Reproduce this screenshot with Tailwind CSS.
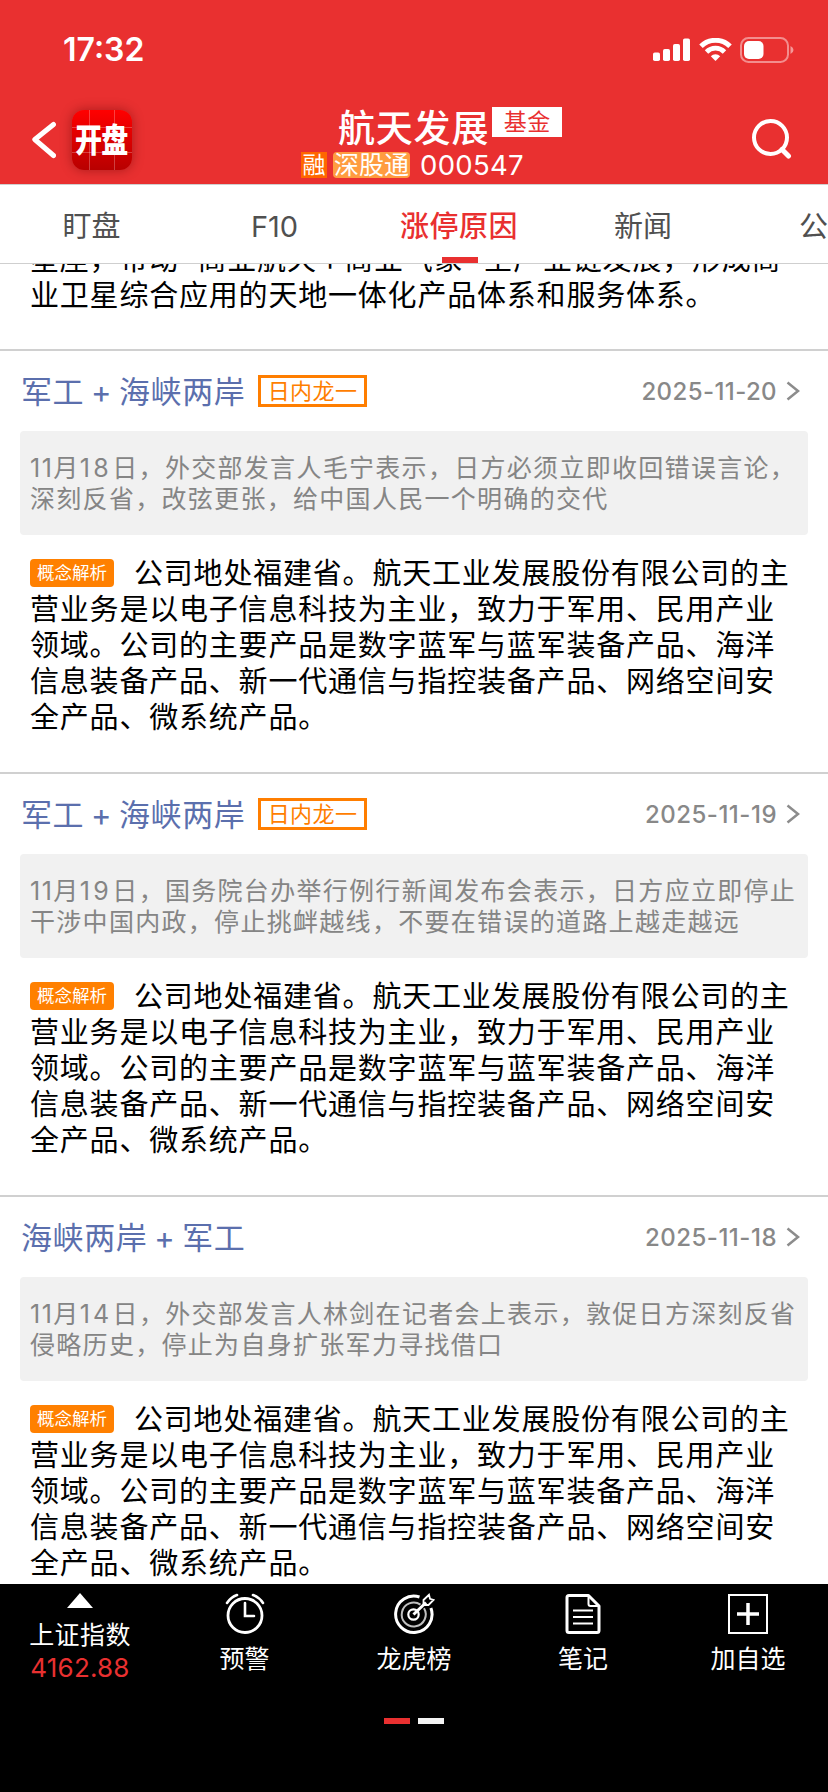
<!DOCTYPE html>
<html lang="zh-CN">
<head>
<meta charset="utf-8">
<title>航天发展 000547</title>
<script src="https://cdn.jsdelivr.net/npm/@tailwindcss/browser@4"></script>
</head>
<body class="bg-white">
<div class="flex h-[1792px] w-[828px] flex-col overflow-hidden bg-white font-['Inter','Noto_Sans_CJK_SC',sans-serif]">

  <!-- Header -->
  <header class="h-[184px] shrink-0 bg-[#e93030] text-white">
    <div class="flex h-[100px] items-center justify-between pl-[63px] pr-[33px]">
      <span class="text-[32px] leading-[40px] font-semibold">17:32</span>
      <div class="flex items-center">
        <svg class="h-[24px] w-[37px]" viewBox="0 0 37 24" fill="#fff"><rect x="0" y="14.500" width="7" height="8.500" rx="1.800"/><rect x="10" y="11" width="7" height="12" rx="1.800"/><rect x="20" y="6" width="7" height="17" rx="1.800"/><rect x="30" y="0.500" width="7" height="22.500" rx="1.800"/></svg>
        <svg class="ml-[9px] h-[24px] w-[33px]" viewBox="0 0 33 24" fill="none" stroke="#fff"><path d="M2 8.300a20.500 20.500 0 0 1 29 0" stroke-width="5"/><path d="M7.500 14a12.600 12.600 0 0 1 18 0" stroke-width="4.800"/><path d="M11.800 18.200a6.700 6.700 0 0 1 9.400 0L16.500 23z" fill="#fff" stroke="none"/></svg>
        <svg class="ml-[8px] mr-px h-[26px] w-[54px]" viewBox="0 0 54 26"><rect x="1" y="1" width="47" height="24" rx="7.500" fill="none" stroke="#fff" stroke-opacity=".45" stroke-width="2"/><rect x="4" y="4" width="19.500" height="18" rx="5" fill="#fff"/><path d="M50.500 9q3 1.300 3 4t-3 4z" fill="#fff" fill-opacity=".5"/></svg>
      </div>
    </div>
    <div class="grid h-[84px] grid-cols-[264px_1fr_264px]">
      <div class="flex items-start pl-[32px] pt-[10px]">
        <svg class="mt-[11px] h-[38px] w-[24px]" viewBox="0 0 24 38" fill="none" stroke="#fff" stroke-width="5" stroke-linecap="round" stroke-linejoin="round"><path d="M21.500 3.500L2.800 18.500L21.500 34.500"/></svg>
        <div class="relative ml-[16px] h-[60px] w-[60px] rounded-[12px] bg-gradient-to-b from-[#ff0000] to-[#b80000] shadow-[0_0_12px_rgba(90,0,0,0.45)]">
          <svg class="absolute inset-0 h-[60px] w-[60px]" viewBox="0 0 60 60" stroke="#fff" stroke-opacity=".25"><path d="M17.500 0V60M42.500 0V60M0 17.500H60M0 42.500H60"/></svg>
          <div class="absolute left-[3px] top-[8px] origin-left scale-x-[0.82] whitespace-nowrap text-[33px] leading-[44px] font-black tracking-[-1px]">开盘</div>
        </div>
      </div>
      <div class="flex flex-col">
        <div class="flex h-[52px] items-start pl-[74px]">
          <span class="mt-[5px] whitespace-nowrap text-[37px] leading-[48px] font-medium tracking-[0.8px]">航天发展</span>
          <span class="ml-[3px] mt-[7px] h-[30px] w-[70px] shrink-0 bg-white text-center text-[23px] leading-[31px] tracking-[0.5px] text-[#e93030]">基金</span>
        </div>
        <div class="flex h-[26px] items-center pl-[37px] leading-[26px]">
          <span class="h-[26px] w-[26px] bg-[#ff6600] text-center text-[23px]">融</span>
          <span class="ml-[6px] h-[26px] w-[77px] whitespace-nowrap rounded-[4px] bg-[#ff9c40] text-center text-[25px]">深股通</span>
          <span class="ml-[10px] text-[27.500px] tracking-[0.3px]">000547</span>
        </div>
      </div>
      <div class="flex justify-end pr-[36px] pt-[19px]">
        <svg class="h-[41px] w-[41px]" viewBox="0 0 41 41" fill="none" stroke="#fff" stroke-width="4"><circle cx="19.500" cy="18.500" r="16.500"/><path d="M31 30.500L37.500 37" stroke-width="5" stroke-linecap="round"/></svg>
      </div>
    </div>
  </header>

  <!-- Tabs -->
  <nav class="grid h-[80px] shrink-0 grid-cols-[183px_183px_188px_178px_96px] border-y border-[#cfcfcf] text-[29px] leading-[84px] text-[#505050]">
    <div class="text-center">盯盘</div>
    <div class="text-center">F10</div>
    <div class="flex flex-col items-center font-medium text-[#e93030]"><span class="mr-[2px] h-[72px] whitespace-nowrap tracking-[0.5px]">涨停原因</span><span class="h-[6px] w-[36px] bg-[#e93030]"></span></div>
    <div class="text-center">新闻</div>
    <div class="overflow-hidden whitespace-nowrap pl-[67px]">公告</div>
  </nav>

  <!-- Reasons -->
  <main class="flex flex-1 flex-col overflow-hidden whitespace-nowrap">
    <section class="h-[87px] shrink-0 overflow-hidden border-b-2 border-[#d0d0d0] pl-[30px] text-[29px] leading-[36px] tracking-[0.8px] text-black">
      <div class="-mt-[22px] flex">星座，带动<span class="w-[18.500px] text-center">“</span>商业航天<span class="w-[27.500px] text-center">+</span>商业气象<span class="w-[20px] text-center">”</span>全产业链发展，形成商</div>
      <div>业卫星综合应用的天地一体化产品体系和服务体系。</div>
    </section>

    <section class="h-[423px] shrink-0 border-b-2 border-[#d0d0d0]">
      <div class="flex h-[80px] items-center pl-[21px] pr-[28px]">
        <h2 class="w-[226px] pt-[2px] text-[31px] leading-[40px] tracking-[0.6px] [word-spacing:-2.5px] text-[#5b6fad]">军工 + 海峡两岸</h2>
        <span class="ml-[11px] h-[32px] w-[109px] border-[3px] border-[#ff7e00] text-center text-[22px] leading-[27px] tracking-[0.4px] text-[#ff7e00]">日内龙一</span>
        <span class="ml-auto pt-[2px] text-[24px] font-medium tracking-[0.4px] text-[#888]">2025-11-20</span>
        <svg class="ml-[9px] h-[20px] w-[14px]" viewBox="0 0 14 20" fill="none" stroke="#8c8c8c" stroke-width="2.500"><path d="M1.500 1.500L12 10L1.500 18.500"/></svg>
      </div>
      <div class="mx-[20px] h-[104px] rounded-[4px] bg-[#f1f1f1] pl-[10px] pt-[22px] text-[25px] leading-[31px] tracking-[1.300px] text-[#858585]">
        <div><span class="tracking-[1.500px]">11</span>月<span class="tracking-[3.500px]">18</span>日，外交部发言人毛宁表示，日方必须立即收回错误言论，</div>
        <div>深刻反省，改弦更张，给中国人民一个明确的交代</div>
      </div>
      <div class="pl-[30px] pt-[21px] text-[29px] leading-[36px] tracking-[0.8px] text-black">
        <div class="flex items-start"><span class="mr-[20px] mt-[3px] h-[28px] w-[84px] rounded-[4px] bg-[#ff8000] text-center text-[17.500px] leading-[28px] tracking-[0px] text-white">概念解析</span>公司地处福建省。航天工业发展股份有限公司的主</div>
        <div>营业务是以电子信息科技为主业，致力于军用、民用产业</div>
        <div>领域。公司的主要产品是数字蓝军与蓝军装备产品、海洋</div>
        <div>信息装备产品、新一代通信与指控装备产品、网络空间安</div>
        <div>全产品、微系统产品。</div>
      </div>
    </section>

    <section class="h-[423px] shrink-0 border-b-2 border-[#d0d0d0]">
      <div class="flex h-[80px] items-center pl-[21px] pr-[28px]">
        <h2 class="w-[226px] pt-[2px] text-[31px] leading-[40px] tracking-[0.6px] [word-spacing:-2.5px] text-[#5b6fad]">军工 + 海峡两岸</h2>
        <span class="ml-[11px] h-[32px] w-[109px] border-[3px] border-[#ff7e00] text-center text-[22px] leading-[27px] tracking-[0.4px] text-[#ff7e00]">日内龙一</span>
        <span class="ml-auto pt-[2px] text-[24px] font-medium tracking-[0.5px] text-[#888]">2025-11-19</span>
        <svg class="ml-[9px] h-[20px] w-[14px]" viewBox="0 0 14 20" fill="none" stroke="#8c8c8c" stroke-width="2.500"><path d="M1.500 1.500L12 10L1.500 18.500"/></svg>
      </div>
      <div class="mx-[20px] h-[104px] rounded-[4px] bg-[#f1f1f1] pl-[10px] pt-[22px] text-[25px] leading-[31px] tracking-[1.300px] text-[#858585]">
        <div><span class="tracking-[1.500px]">11</span>月<span class="tracking-[3.500px]">19</span>日，国务院台办举行例行新闻发布会表示，日方应立即停止</div>
        <div>干涉中国内政，停止挑衅越线，不要在错误的道路上越走越远</div>
      </div>
      <div class="pl-[30px] pt-[21px] text-[29px] leading-[36px] tracking-[0.8px] text-black">
        <div class="flex items-start"><span class="mr-[20px] mt-[3px] h-[28px] w-[84px] rounded-[4px] bg-[#ff8000] text-center text-[17.500px] leading-[28px] tracking-[0px] text-white">概念解析</span>公司地处福建省。航天工业发展股份有限公司的主</div>
        <div>营业务是以电子信息科技为主业，致力于军用、民用产业</div>
        <div>领域。公司的主要产品是数字蓝军与蓝军装备产品、海洋</div>
        <div>信息装备产品、新一代通信与指控装备产品、网络空间安</div>
        <div>全产品、微系统产品。</div>
      </div>
    </section>

    <section class="h-[423px] shrink-0">
      <div class="flex h-[80px] items-center pl-[21px] pr-[28px]">
        <h2 class="w-[226px] pt-[2px] text-[31px] leading-[40px] tracking-[0.6px] [word-spacing:-2.5px] text-[#5b6fad]">海峡两岸 + 军工</h2>
        <span class="ml-auto pt-[2px] text-[24px] font-medium tracking-[0.5px] text-[#888]">2025-11-18</span>
        <svg class="ml-[9px] h-[20px] w-[14px]" viewBox="0 0 14 20" fill="none" stroke="#8c8c8c" stroke-width="2.500"><path d="M1.500 1.500L12 10L1.500 18.500"/></svg>
      </div>
      <div class="mx-[20px] h-[104px] rounded-[4px] bg-[#f1f1f1] pl-[10px] pt-[22px] text-[25px] leading-[31px] tracking-[1.300px] text-[#858585]">
        <div><span class="tracking-[1.500px]">11</span>月<span class="tracking-[3.300px]">14</span>日，外交部发言人林剑在记者会上表示，敦促日方深刻反省</div>
        <div>侵略历史，停止为自身扩张军力寻找借口</div>
      </div>
      <div class="pl-[30px] pt-[21px] text-[29px] leading-[36px] tracking-[0.8px] text-black">
        <div class="flex items-start"><span class="mr-[20px] mt-[3px] h-[28px] w-[84px] rounded-[4px] bg-[#ff8000] text-center text-[17.500px] leading-[28px] tracking-[0px] text-white">概念解析</span>公司地处福建省。航天工业发展股份有限公司的主</div>
        <div>营业务是以电子信息科技为主业，致力于军用、民用产业</div>
        <div>领域。公司的主要产品是数字蓝军与蓝军装备产品、海洋</div>
        <div>信息装备产品、新一代通信与指控装备产品、网络空间安</div>
        <div>全产品、微系统产品。</div>
      </div>
    </section>
  </main>

  <!-- Bottom toolbar -->
  <footer class="h-[208px] shrink-0 bg-black text-white">
    <div class="grid h-[134px] grid-cols-[160px_169px_170px_168px_161px] text-[25px]">
      <div class="flex flex-col items-center pt-[9px]">
        <svg class="h-[15px] w-[26px]" viewBox="0 0 26 15" fill="#fff"><path d="M13 0L26 15H0z"/></svg>
        <span class="mt-[11px] leading-[32px] tracking-[0.400px]">上证指数</span>
        <span class="mt-px text-[26px] leading-[32px] tracking-[0.200px] text-[#e93030]">4162.88</span>
      </div>
      <div class="flex flex-col items-center pt-[9px]">
        <svg class="h-[42px] w-[40px]" viewBox="0 0 40 42" fill="none" stroke="#fff" stroke-linecap="round"><circle cx="20" cy="22.500" r="17" stroke-width="2.800"/><path d="M20 10V23H29" stroke-width="2.600"/><path d="M2 10Q6 4 12 2M38 10Q34 4 28 2" stroke-width="2.600"/></svg>
        <span class="mt-[8px] leading-[32px]">预警</span>
      </div>
      <div class="flex flex-col items-center pt-[9px]">
        <svg class="h-[42px] w-[42px]" viewBox="0 0 42 42" fill="none" stroke="#fff"><path d="M26.500 4A18.200 18.200 0 1 0 37.900 15" stroke-width="3"/><path d="M27.500 11.600A12 12 0 1 0 31 15.300" stroke-width="2" stroke-opacity=".75"/><circle cx="20.500" cy="21.500" r="5.200" stroke-width="2.200"/><path d="M20.500 21.500L33 9.500" stroke-width="3"/><path d="M30.500 11V7L36 1.800L37 5.800L40.500 7L35.500 12H31.500z" stroke-width="1.800"/></svg>
        <span class="mt-[8px] leading-[32px]">龙虎榜</span>
      </div>
      <div class="flex flex-col items-center pt-[9px]">
        <svg class="h-[42px] w-[36px]" viewBox="0 0 36 42" fill="none" stroke="#fff" stroke-linejoin="round"><path d="M4 2.500H23.500L34 13V37.500Q34 39.500 32 39.500H4Q2 39.500 2 37.500V4.500Q2 2.500 4 2.500z" stroke-width="3"/><path d="M23.500 2.500V11Q23.500 13 25.500 13H34" stroke-width="2"/><path d="M8 17.500H28M8 24H28M8 30.500H28" stroke-width="2"/></svg>
        <span class="mt-[8px] leading-[32px]">笔记</span>
      </div>
      <div class="flex flex-col items-center pl-px pt-[9px]">
        <svg class="h-[42px] w-[40px]" viewBox="0 0 40 42" fill="none" stroke="#fff"><rect x="1" y="2" width="38" height="38" stroke-width="2"/><path d="M20 10V32M9 21H31" stroke-width="3.500"/></svg>
        <span class="mt-[8px] leading-[32px]">加自选</span>
      </div>
    </div>
    <div class="flex justify-center gap-[8px]"><span class="h-[6px] w-[26px] bg-[#e93030]"></span><span class="h-[6px] w-[26px] bg-[#f3f3f3]"></span></div>
  </footer>
</div>
</body>
</html>
